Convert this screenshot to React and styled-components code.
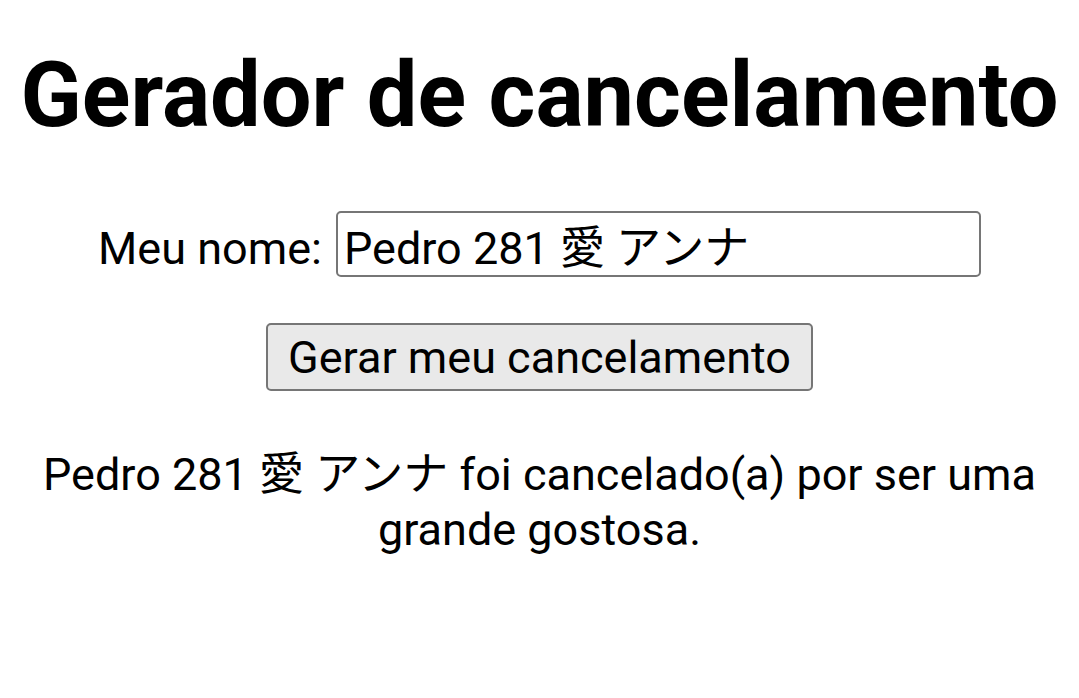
import React from 'react';
import styled, { createGlobalStyle } from 'styled-components';

const GlobalStyle = createGlobalStyle`
  body {
    margin: 0;
    background: #fff;
    font-family: Roboto, "Noto Sans CJK JP", sans-serif;
    color: #000;
  }
`;

const Page = styled.div`
  display: flex;
  flex-direction: column;
  align-items: center;
  text-align: center;
  padding: 0 21px;
`;

const Title = styled.h1`
  font-size: 90px;
  font-weight: 700;
  margin: 46px 0 0;
  line-height: 100px;
  white-space: nowrap;
`;

const Row = styled.div`
  display: flex;
  align-items: baseline;
  gap: 14px;
  margin-top: 65px;
`;

const Label = styled.label`
  font-size: 45px;
`;

const Input = styled.input`
  width: 645px;
  height: 66px;
  box-sizing: border-box;
  border: 2px solid #767676;
  border-radius: 5px;
  padding: 0 6px;
  font-family: Roboto, "Noto Sans CJK JP", sans-serif;
  font-size: 45px;
  color: #000;
  outline: none;
`;

const Button = styled.button`
  margin-top: 46px;
  height: 68px;
  padding: 0 20px;
  background: #e9e9e9;
  border: 2px solid #767676;
  border-radius: 5px;
  font-family: Roboto, "Noto Sans CJK JP", sans-serif;
  font-size: 45px;
  color: #000;
`;

const Result = styled.p`
  margin: 56px 0 0;
  font-size: 45px;
  line-height: 55px;
`;

const name = 'Pedro 281 愛 アンナ';

const App = () => (
  <>
    <GlobalStyle />
    <Page>
      <Title>Gerador de cancelamento</Title>
      <Row>
        <Label>Meu nome:</Label>
        <Input defaultValue={name} />
      </Row>
      <Button>Gerar meu cancelamento</Button>
      <Result>
        {name} foi cancelado(a) por ser uma
        <br />
        grande gostosa.
      </Result>
    </Page>
  </>
);

export default App;
